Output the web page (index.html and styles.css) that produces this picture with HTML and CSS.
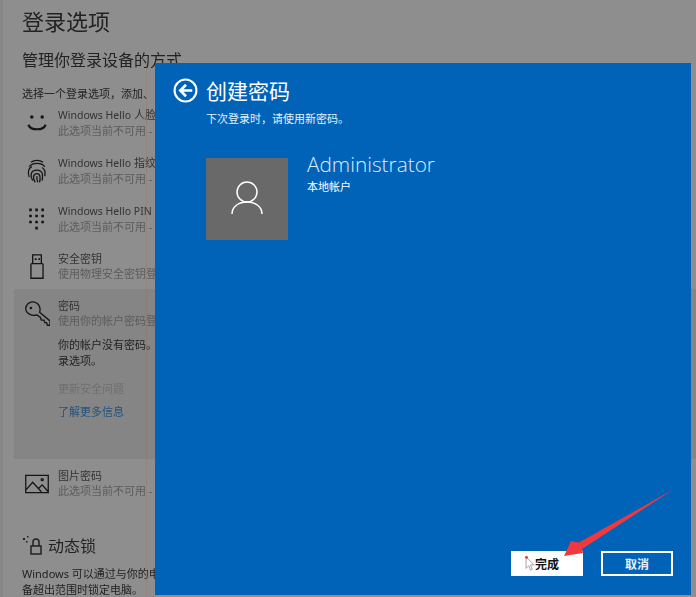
FILE: index.html
```html
<!DOCTYPE html>
<html>
    <head>
        <meta charset="utf-8">
        <title>登录选项</title>
        <link rel="stylesheet" href="styles.css">
    </head>
    <body>
        <div id="settings">
            <h1>登录选项</h1>
            <h2>管理你登录设备的方式</h2>
            <p class="lead">选择一个登录选项，添加、</p>

            <div class="option">
                <svg class="icon" viewBox="0 0 30 30"><circle cx="9" cy="8" r="2" class="fill"/><circle cx="21" cy="8" r="2" class="fill"/><path d="M5 17c3 7 17 7 20 0" class="thick"/></svg>
                <div class="text"><div><span class="hello">Windows Hello</span> 人脸</div><div class="sub">此选项当前不可用 - 单击以了解详细信息</div></div>
            </div>
            <div class="option">
                <svg class="icon" viewBox="0 0 30 30"><path d="M8 5c4-3 10-3 14 0M6 10c4-5 14-5 18 0M6 22c-2-6-1-10 3-12M24 21c1-5 0-8-3-10M10 26c-3-5-3-12 5-12 7 0 7 6 6 12M13 28c-3-4-3-10 2-10 4 0 4 5 3 10M15 21c-.5 2 0 5 1 7"/></svg>
                <div class="text"><div><span class="hello">Windows Hello</span> 指纹</div><div class="sub">此选项当前不可用 - 单击以了解详细信息</div></div>
            </div>
            <div class="option">
                <svg class="icon" viewBox="0 0 30 30"><path class="fill" d="M6 3h3v3H6zM13 3h3v3h-3zM20 3h3v3h-3zM6 10h3v3H6zM13 10h3v3h-3zM20 10h3v3h-3zM6 17h3v3H6zM13 17h3v3h-3zM20 17h3v3h-3zM13 24h3v3h-3z"/></svg>
                <div class="text"><div><span class="hello">Windows Hello PIN</span></div><div class="sub">此选项当前不可用 - 单击以了解详细信息</div></div>
            </div>
            <div class="option">
                <svg class="icon" viewBox="0 0 30 30"><path d="M10 1h10v10H10zM9 11h12c.5 0 1 .5 1 1v16H8V12c0-.5.5-1 1-1z"/><path class="fill" d="M12.500 5h2v2h-2zM16.500 5h2v2h-2z"/></svg>
                <div class="text"><div>安全密钥</div><div class="sub">使用物理安全密钥登录</div></div>
            </div>
            <div class="option selected">
                <svg class="icon" viewBox="0 0 30 30"><path d="M2 9c0-5 4-8 8-8 6 0 10 6 8 12l12 10v5h-3l-1-3h-2l-1-3h-3l-1-3-4-3c-6 2-13-2-13-7z"/><circle cx="8" cy="8" r="1.500" class="fill"/></svg>
                <div class="text">
                    <div>密码</div>
                    <div class="sub">使用你的帐户密码登录</div>
                    <div class="note">你的帐户没有密码。必须先添加密码，然后才能使用其他登<br>录选项。</div>
                    <div class="sub disabled">更新安全问题</div>
                    <div class="link">了解更多信息</div>
                </div>
            </div>
            <div class="option">
                <svg class="icon" viewBox="0 0 30 30"><path d="M2 5h26v20H2zM2 22l8-9 10 11M17 20l4-4 7 8"/><circle cx="21" cy="10" r="1.200"/></svg>
                <div class="text"><div>图片密码</div><div class="sub">此选项当前不可用 - 单击以了解详细信息</div></div>
            </div>

            <div class="lock-head">
                <svg class="lock-icon" viewBox="0 0 20 20"><path d="M9 11h10v8H9zM11 11V7c0-4 6-4 6 0v4"/><path class="fill" d="M1 3h2v2H1zM5 1h1.500v1.500H5zM4 6h1.500v1.500H4z"/></svg>
                <h3>动态锁</h3>
            </div>
            <p class="lock-text">Windows 可以通过与你的电脑配对的设备获知你何时离开，并在这些设<br>备超出范围时锁定电脑。</p>
        </div>

        <div id="dialog">
            <div class="head">
                <svg class="back" viewBox="0 0 24 24"><circle cx="12" cy="12" r="10.500"/><path class="arrowhead" d="M18.500 12H8M12.500 6.500 7 12l5.500 5.500"/></svg>
                <h2>创建密码</h2>
            </div>
            <p class="hint">下次登录时，请使用新密码。</p>
            <div class="account">
                <div class="avatar">
                    <svg viewBox="0 0 32 34"><circle cx="16" cy="11" r="10"/><path d="M1 33c0-16 30-16 30 0"/></svg>
                </div>
                <div>
                    <div class="name">Administrator</div>
                    <div class="kind">本地帐户</div>
                </div>
            </div>
            <div class="spacer"></div>
            <div class="buttons">
                <button class="ok">完成</button>
                <button class="cancel">取消</button>
            </div>
        </div>

        <!-- annotation pasted on top of the screenshot -->
        <svg id="arrow" viewBox="0 0 696 597"><path d="M674 489 579 542.500 571 541 564 556 583 553 582 549z"/></svg>
        <svg id="cursor" viewBox="0 0 12 18"><path d="M1 1v13l3-3 2 5 2-1-2-5h4z"/><circle cx="1.500" cy="1.500" r="1.500"/></svg>
    </body>
</html>
```

FILE: styles.css
```css
html, body {
    height: 100%;
}
body {
    margin: 0;
    background-color: #8e8e8e;
    color: #222;
    font-family: "Noto Sans", "Noto Sans CJK SC", sans-serif;
    font-size: 11px;
    overflow: hidden;
}

svg {
    fill: none;
    stroke: currentColor;
    stroke-width: 1.500;
}
svg .fill {
    fill: currentColor;
    stroke: none;
}
svg .thick {
    stroke-width: 2.500;
}

#settings {
    height: 100%;
    box-sizing: border-box;
    padding-left: 19px;
    border-left: 3px solid #878787;
    overflow: hidden;
    white-space: nowrap;
    filter: blur(0.35px);
}
#settings h1 {
    margin: 0;
    padding-top: 5px;
    font-size: 22px;
    font-weight: 400;
    line-height: 32px;
}
#settings h2 {
    margin: 0;
    padding-top: 15px;
    font-size: 16px;
    font-weight: 400;
    line-height: 16px;
}
.lead {
    margin: 0;
    padding-top: 18px;
    line-height: 15px;
    height: 14px;
}

.option {
    display: flex;
    height: 48px;
    margin-left: -8px;
    padding-top: 7px;
    box-sizing: border-box;
    line-height: 15px;
    color: #333;
}
.option .icon {
    flex: none;
    width: 26px;
    height: 26px;
    margin: 3px 8px 0 10px;
    color: #151515;
}
.option .text {
    width: 300px;
}
.hello {
    font-size: 10.500px;
}
.sub {
    color: #5c5c5c;
}
.selected {
    height: 170px;
    background-color: #858585;
    margin-top: -3px;
    margin-bottom: 2px;
    padding-top: 9px;
}
.note {
    margin-top: 9px;
    line-height: 16px;
    color: #222;
}
.disabled {
    margin-top: 12px;
    color: #6f6f6f;
}
.link {
    margin-top: 8px;
    color: #24527e;
}

.lock-head {
    display: flex;
    align-items: center;
    gap: 6px;
    padding-top: 24px;
    height: 24px;
}
.lock-icon {
    width: 20px;
    height: 20px;
}
.lock-head h3 {
    margin: 0;
    font-size: 16px;
    font-weight: 400;
}
.lock-text {
    margin: 9px 0 0;
    line-height: 16px;
}

#dialog {
    position: absolute;
    left: 155px;
    top: 63px;
    width: 536px;
    height: 532px;
    display: flex;
    flex-direction: column;
    box-sizing: border-box;
    padding: 15px 18px 19px 51px;
    background-color: #0063b8;
    color: #fff;
    font-family: "Noto Sans CJK SC", sans-serif;
}
/* faint seam left of the dialog in the capture */
#dialog::before {
    content: "";
    position: absolute;
    left: -9px;
    top: 0;
    bottom: -2px;
    width: 1px;
    background-color: rgba(170, 110, 70, 0.3);
}
.head {
    display: flex;
    align-items: center;
    height: 24px;
}
.head h2 {
    margin: 0;
    font-size: 21px;
    font-weight: 400;
    line-height: 24px;
}
.back {
    width: 25px;
    height: 25px;
    margin-left: -33px;
    margin-right: 8px;
    stroke-width: 2;
}
.back .arrowhead {
    stroke-width: 2.500;
}
.hint {
    margin: 8px 0 0;
    line-height: 16px;
    color: #e6f2fb;
}
.account {
    display: flex;
    gap: 19px;
    margin-top: 32px;
}
.avatar {
    display: flex;
    align-items: center;
    justify-content: center;
    width: 82px;
    height: 82px;
    background-color: #696969;
}
.avatar svg {
    width: 32px;
    height: 36px;
    margin-bottom: 2px;
}
.name {
    font-family: "Open Sans", sans-serif;
    font-size: 20.800px;
    font-weight: 300;
    line-height: 12px;
    color: #dcecf8;
}
.kind {
    margin-top: 9px;
    line-height: 14px;
}
.spacer {
    flex: 1;
}
.buttons {
    display: flex;
    justify-content: flex-end;
    gap: 18px;
}
.buttons button {
    width: 72px;
    height: 25px;
    padding: 0;
    border: 2px solid #fff;
    font-family: "Noto Sans CJK SC", sans-serif;
    font-size: 12px;
    font-weight: 700;
}
.ok {
    background-color: #fff;
    color: #111;
}
.cancel {
    background-color: transparent;
    border-color: #cfe6f7;
    color: #e6f2fb;
}

#arrow {
    position: absolute;
    left: 0;
    top: 0;
    width: 696px;
    height: 597px;
    stroke: none;
    fill: #f0393e;
}
#cursor {
    position: absolute;
    left: 525px;
    top: 556px;
    width: 11px;
    height: 16px;
    fill: #fff;
    stroke: #999;
    stroke-width: 1;
}
#cursor circle {
    fill: #e0303a;
    stroke: none;
}
```
